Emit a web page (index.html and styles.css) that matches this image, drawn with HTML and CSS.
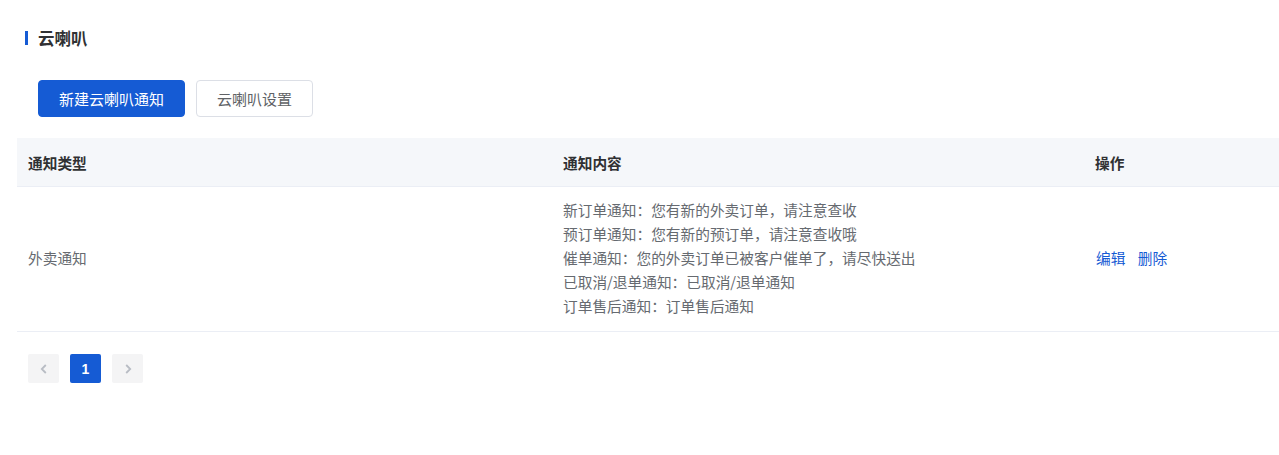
FILE: index.html
```html
<!DOCTYPE html>
<html lang="zh-CN">
<head>
    <meta charset="UTF-8">
    <title>云喇叭</title>
    <link rel="stylesheet" href="styles.css">
</head>
<body>
    <div class="page">
        <div class="title">云喇叭</div>

        <div class="actions">
            <button type="button" class="btn btn-primary">新建云喇叭通知</button>
            <button type="button" class="btn">云喇叭设置</button>
        </div>

        <table class="table">
            <colgroup>
                <col class="col-type">
                <col class="col-content">
                <col>
            </colgroup>
            <thead>
                <tr>
                    <th>通知类型</th>
                    <th>通知内容</th>
                    <th>操作</th>
                </tr>
            </thead>
            <tbody>
                <tr>
                    <td>外卖通知</td>
                    <td class="content">
                        <div>新订单通知：您有新的外卖订单，请注意查收</div>
                        <div>预订单通知：您有新的预订单，请注意查收哦</div>
                        <div>催单通知：您的外卖订单已被客户催单了，请尽快送出</div>
                        <div>已取消/退单通知：已取消/退单通知</div>
                        <div>订单售后通知：订单售后通知</div>
                    </td>
                    <td>
                        <a class="link" href="#">编辑</a>
                        <a class="link" href="#">删除</a>
                    </td>
                </tr>
            </tbody>
        </table>

        <div class="pager">
            <span class="page-btn disabled">
                <svg width="10" height="12" viewBox="0 0 10 12"><path d="M6.8 2 2.8 6l4 4" fill="none" stroke="#b8bcc4" stroke-width="1.8"/></svg>
            </span>
            <span class="page-btn active">1</span>
            <span class="page-btn disabled">
                <svg width="10" height="12" viewBox="0 0 10 12"><path d="M3.2 2 7.2 6l-4 4" fill="none" stroke="#b8bcc4" stroke-width="1.8"/></svg>
            </span>
        </div>
    </div>
</body>
</html>
```

FILE: styles.css
```css
body {
    margin: 0;
    font-family: "Noto Sans CJK SC", "Liberation Sans", sans-serif;
    font-size: 14.7px;
    color: #666a70;
    background-color: #fff;
}
.page {
    padding: 29px 0 0 17px;
    overflow: hidden;
}
.title {
    border-left: 3px solid #155bd4;
    margin-left: 8px;
    padding-left: 10px;
    height: 14px;
    line-height: 14px;
    font-size: 16.5px;
    font-weight: bold;
    color: #303133;
    margin-top: 2px;
}
.actions {
    display: flex;
    gap: 11px;
    margin: 35px 0 0 21px;
}
.btn {
    height: 37px;
    padding: 0 20px;
    border: 1px solid #dcdfe6;
    border-radius: 4px;
    background-color: #fff;
    color: #606266;
    font-family: inherit;
    font-size: 15px;
    cursor: pointer;
}
.btn-primary {
    background-color: #155bd4;
    border-color: #155bd4;
    color: #fff;
}
.table {
    width: 1280px;
    margin-top: 21px;
    border-collapse: collapse;
    table-layout: fixed;
}
.col-type {
    width: 535px;
}
.col-content {
    width: 532px;
}
.table th {
    background-color: #f5f7fa;
    height: 48px;
    padding: 0 11px;
    text-align: left;
    font-size: 14.7px;
    font-weight: bold;
    color: #303133;
    border-bottom: 1px solid #ebeef5;
}
.table td {
    padding: 11px 11px 13px;
    border-bottom: 1px solid #ebeef5;
    line-height: 24px;
    vertical-align: middle;
}
.link {
    color: #155bd4;
    text-decoration: none;
    margin-left: 1px;
    margin-right: 8px;
}
.pager {
    display: flex;
    gap: 11px;
    margin: 22px 0 0 11px;
}
.page-btn {
    width: 31px;
    height: 29px;
    border-radius: 2px;
    background-color: #f4f4f5;
    display: flex;
    align-items: center;
    justify-content: center;
    font-family: "Liberation Sans", sans-serif;
    font-size: 14px;
    font-weight: bold;
    color: #606266;
}
.page-btn.active {
    background-color: #155bd4;
    color: #fff;
}
```
